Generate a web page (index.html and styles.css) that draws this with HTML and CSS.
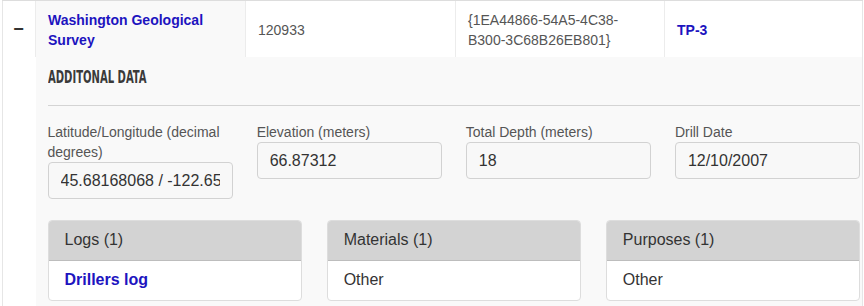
FILE: index.html
```html
<!DOCTYPE html>
<html lang="en">
<head>
    <meta charset="UTF-8">
    <meta name="viewport" content="width=device-width, initial-scale=1.0">
    <title>Well Details</title>
    <link rel="stylesheet" href="styles.css">
</head>
<body>
    <table class="wells">
        <colgroup>
            <col class="col-toggle">
            <col class="col-source">
            <col class="col-id">
            <col class="col-guid">
            <col>
        </colgroup>
        <tr class="well-row">
            <td class="toggle"><span class="minus">&minus;</span></td>
            <td class="sorted"><a href="#" class="link">Washington Geological Survey</a></td>
            <td>120933</td>
            <td>{1EA44866-54A5-4C38-<br>B300-3C68B26EB801}</td>
            <td><a href="#" class="link">TP-3</a></td>
        </tr>
        <tr class="detail-row">
            <td class="toggle-blank"></td>
            <td class="detail" colspan="4">
                <h4 class="detail-title"><span>Additonal Data</span></h4>

                <div class="fields">
                    <div class="field">
                        <label for="latlon">Latitude/Longitude (decimal degrees)</label>
                        <input type="text" id="latlon" value="45.68168068 / -122.65" readonly>
                    </div>
                    <div class="field">
                        <label for="elevation">Elevation (meters)</label>
                        <input type="text" id="elevation" value="66.87312" readonly>
                    </div>
                    <div class="field">
                        <label for="depth">Total Depth (meters)</label>
                        <input type="text" id="depth" value="18" readonly>
                    </div>
                    <div class="field">
                        <label for="drillDate">Drill Date</label>
                        <input type="text" id="drillDate" value="12/10/2007" readonly>
                    </div>
                </div>

                <div class="panels">
                    <div class="panel">
                        <div class="panel-heading">Logs (1)</div>
                        <div class="panel-body"><a href="#" class="link">Drillers log</a></div>
                    </div>
                    <div class="panel">
                        <div class="panel-heading">Materials (1)</div>
                        <div class="panel-body">Other</div>
                    </div>
                    <div class="panel">
                        <div class="panel-heading">Purposes (1)</div>
                        <div class="panel-body">Other</div>
                    </div>
                </div>
            </td>
        </tr>
    </table>
</body>
</html>
```

FILE: styles.css
```css
body {
    font-family: "Liberation Sans", Arial, sans-serif;
    font-size: 14px;
    color: #555;
    background-color: #ffffff;
    margin: 0;
    overflow: hidden;
}
.wells {
    margin-left: 2px;
    width: 861px;
    table-layout: fixed;
    border-collapse: collapse;
    border-left: 1px solid #e6e6e6;
    border-right: 1px solid #e6e6e6;
}
.col-toggle {
    width: 33px;
}
.col-source, .col-id {
    width: 210px;
}
.col-guid {
    width: 209px;
}
.well-row td {
    border-top: 1px solid #dddddd;
    border-left: 1px solid #ececec;
    padding: 9px 12px 7px 12px;
    line-height: 20px;
    vertical-align: middle;
}
.well-row td.toggle {
    border-left: none;
    padding: 0 1px 0 0;
    text-align: center;
}
.minus {
    font-weight: bold;
    font-size: 18px;
    color: #333;
}
.sorted {
    background-color: #f9f9f9;
}
.link {
    color: #1d14bf;
    font-weight: bold;
    text-decoration: none;
}
.detail {
    background-color: #f9f9f9;
    padding: 9px 2px 8px 12px;
}
.detail-title {
    margin: 0;
    padding-bottom: 17px;
    border-bottom: 1px solid #d4d4d4;
    font-family: "DejaVu Sans Condensed", "Liberation Sans", sans-serif;
    font-size: 18px;
    line-height: 22px;
    font-weight: bold;
    text-transform: uppercase;
    color: #3a3a3a;
}
/* the original heading face is a tall condensed display font */
.detail-title span {
    display: inline-block;
    transform: scaleX(0.62);
    transform-origin: left center;
    white-space: nowrap;
}
.fields {
    display: grid;
    grid-template-columns: repeat(4, 1fr);
    column-gap: 24px;
    margin-top: 16px;
    align-items: start;
}
.field label {
    display: block;
    line-height: 20px;
    color: #555;
}
.field input {
    display: block;
    width: 100%;
    height: 37px;
    box-sizing: border-box;
    padding: 6px 12px;
    font-family: "Liberation Sans", Arial, sans-serif;
    font-size: 16px;
    color: #333;
    background-color: #f8f8f8;
    border: 1px solid #d2d2d2;
    border-radius: 4px;
}
.panels {
    display: grid;
    grid-template-columns: repeat(3, 1fr);
    column-gap: 25px;
    margin-top: 21px;
}
.panel {
    background-color: #ffffff;
    border: 1px solid #dddddd;
    border-radius: 4px;
    font-size: 16px;
    line-height: 22px;
    color: #333;
}
.panel-heading {
    background-color: #d3d3d3;
    padding: 8px 16px 9px 16px;
    border-bottom: 1px solid #bdbdbd;
    border-radius: 3px 3px 0 0;
}
.panel-body {
    padding: 8px 16px 9px 16px;
}
```
